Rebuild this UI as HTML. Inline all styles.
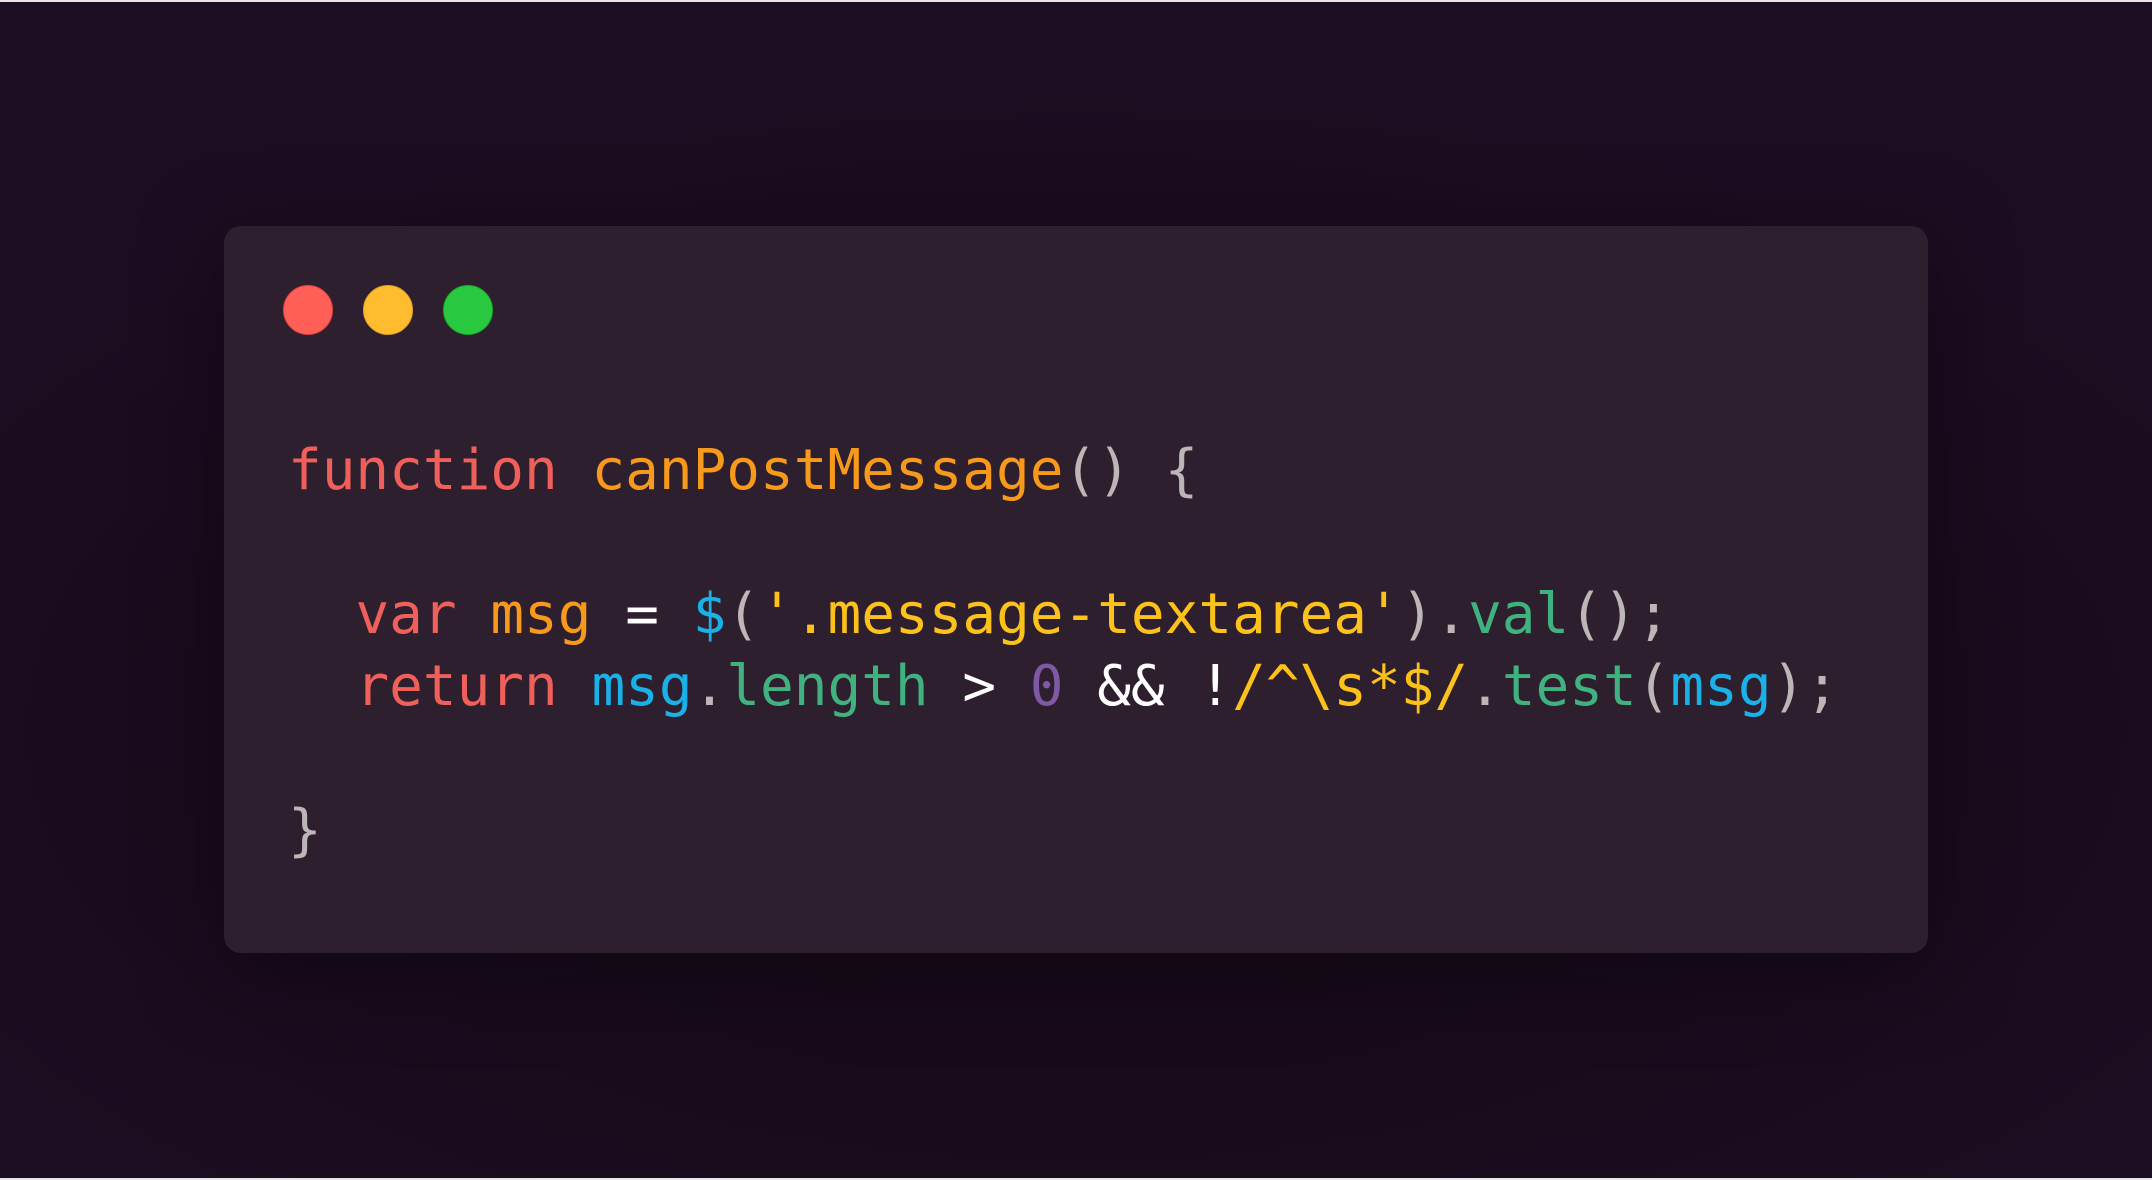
<!DOCTYPE html>
<html><head><meta charset="utf-8"><style>
html,body{margin:0;padding:0;}
body{width:2152px;height:1180px;position:relative;overflow:hidden;
background:radial-gradient(ellipse 60% 55% at 50% 62%,#150915 0%,#180b1b 60%,#1d0d22 100%);}
.topline{position:absolute;left:0;top:0;width:2152px;height:2px;background:#e8e4e8;}
.botline{position:absolute;left:0;bottom:0;width:2152px;height:2px;background:#e8e4e8;}
.win{position:absolute;left:224px;top:226px;width:1704px;height:727px;background:#2e1f2e;border-radius:17px;box-shadow:0 20px 80px rgba(10,3,12,0.5);}
.dot{position:absolute;top:59px;width:48px;height:48px;border-radius:50%;}
.r{left:59px;background:#ff5f57;border:1px solid #e0443e;}
.y{left:139px;background:#febc2e;border:1px solid #dea123;}
.g{left:219px;background:#28c840;border:1px solid #1aab29;}
pre{position:absolute;left:64px;top:209px;margin:0;font-family:"DejaVu Sans Mono","Liberation Mono",monospace;font-size:56px;line-height:72px;color:#bdb6b6;}
.k{color:#f0605a}.f{color:#f79a1c}.p{color:#bdb6b6}.b{color:#19b1e8}.s{color:#fcc21b}.m{color:#40b27f}.n{color:#7e5aa6}.w{color:#ffffff}
</style></head><body>
<div class="topline"></div>
<div class="botline"></div>
<div class="win">
<div class="dot r"></div><div class="dot y"></div><div class="dot g"></div>
<pre><span class="k">function</span> <span class="f">canPostMessage</span><span class="p">() {</span>

  <span class="k">var</span> <span class="f">msg</span> <span class="w">=</span> <span class="b">$</span><span class="p">(</span><span class="s">'.message-textarea'</span><span class="p">).</span><span class="m">val</span><span class="p">();</span>
  <span class="k">return</span> <span class="b">msg</span><span class="p">.</span><span class="m">length</span> <span class="w">&gt;</span> <span class="n">0</span> <span class="w">&amp;&amp; !</span><span class="s">/^\s*$/</span><span class="p">.</span><span class="m">test</span><span class="p">(</span><span class="b">msg</span><span class="p">);</span>

<span class="p">}</span></pre>
</div>
</body></html>
